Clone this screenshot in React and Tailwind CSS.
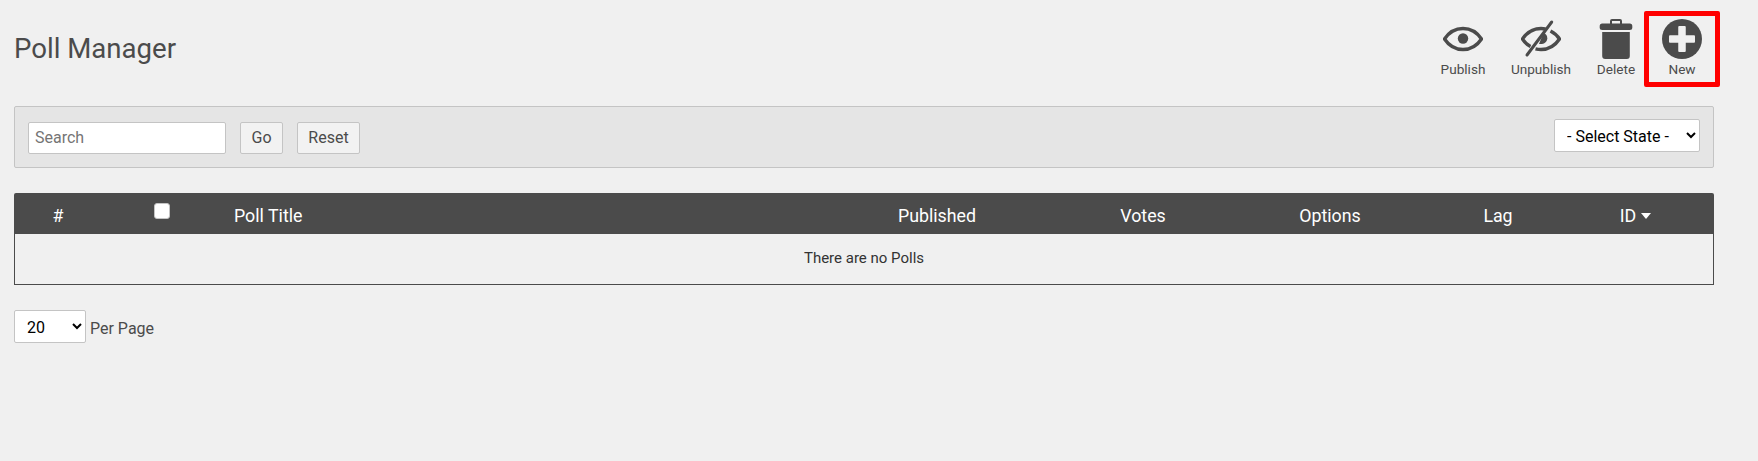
import React from 'react'

const EyeIcon = () => (
  <svg width="40" height="40" viewBox="0 0 40 40" fill="none">
    <path d="M1.500 20C6.500 12.500 13 9.500 20 9.500S33.500 12.500 38.500 20C33.500 27.500 27 30.500 20 30.500S6.500 27.500 1.500 20Z" stroke="#4b4b4b" strokeWidth="3.4" strokeLinejoin="round" />
    <circle cx="20" cy="19.500" r="5.2" fill="#4b4b4b" />
  </svg>
)

const EyeOffIcon = () => (
  <svg width="40" height="40" viewBox="0 0 40 40" fill="none">
    <path d="M9.500 27.500C6.500 26 3.800 23.500 1.500 20C6.500 12.500 13 9.500 20 9.500C21.500 9.500 23 9.700 24.500 10M29.500 12C33 13.800 36.300 16.500 38.500 20C33.500 27.500 27 30.500 20 30.500C18 30.500 16.500 30.300 14.500 29.800" stroke="#4b4b4b" strokeWidth="3.4" strokeLinejoin="round" />
    <path d="M22.500 13.800A6 6 0 0 1 26.300 19.500C26 23 23 25.500 18 25Z" fill="#4b4b4b" />
    <path d="M30.700 3L6 36" stroke="#4b4b4b" strokeWidth="3" strokeLinecap="round" />
  </svg>
)

const TrashIcon = () => (
  <svg width="34" height="40" viewBox="0 0 34 40">
    <path d="M12 5V2a1 1 0 0 1 1-1h8a1 1 0 0 1 1 1v3" fill="none" stroke="#4b4b4b" strokeWidth="2" />
    <rect x="0.700" y="4.500" width="32.600" height="6.500" rx="2.500" fill="#4b4b4b" />
    <path d="M3.200 13h27.600v24a3 3 0 0 1-3 3H6.200a3 3 0 0 1-3-3Z" fill="#4b4b4b" />
  </svg>
)

const PlusIcon = () => (
  <svg width="40" height="40" viewBox="0 0 40 40">
    <circle cx="20" cy="20" r="20" fill="#4b4b4b" />
    <rect x="16.250" y="7" width="7.500" height="26" rx="1" fill="#f0f0f0" />
    <rect x="7" y="16.250" width="26" height="7.500" rx="1" fill="#f0f0f0" />
  </svg>
)

const ToolbarButton = ({ icon, label, className }) => (
  <button className={`flex flex-col items-center text-[13.6px] leading-[16px] text-[#4b4b4b] ${className}`}>
    <span className="h-10 flex items-center justify-center">{icon}</span>
    <span className="mt-[2px] whitespace-nowrap">{label}</span>
  </button>
)

const App = () => {
  return (
    <div className="min-h-[461px] bg-[#f0f0f0] font-['Roboto',sans-serif] text-[#4b4b4b]">
      <div className="w-[1720px] pl-[14px] pt-[11px]">

        {/* TITLE + TOOLBAR */}
        <div className="flex items-start justify-between h-[76px]">
          <h1 className="text-[27.6px] leading-[32px] font-normal mt-[22px]">Poll Manager</h1>

          <div className="flex items-start">
            <ToolbarButton icon={<EyeIcon />} label="Publish" className="w-[60px] pt-[8px]" />
            <ToolbarButton icon={<EyeOffIcon />} label="Unpublish" className="w-[60px] ml-[18px] pt-[8px]" />
            <ToolbarButton icon={<TrashIcon />} label="Delete" className="w-[40px] ml-[25px] pt-[8px]" />
            <div className="ml-[8px] w-[76px] h-[76px] border-[5px] border-[#ff0000] rounded-[2px]">
              <ToolbarButton icon={<PlusIcon />} label="New" className="w-full pt-[3px]" />
            </div>
          </div>
        </div>

        {/* FILTER BAR */}
        <div className="w-[1700px] h-[62px] mt-[19px] flex items-start justify-between bg-[#e5e5e5] border border-[#c4c4c4] rounded-[2px] pl-[13px] pr-[13px]">
          <div className="flex items-center mt-[15px]">
            <input
              type="text"
              placeholder="Search"
              className="w-[198px] h-[32px] bg-white border border-[#c4c4c4] rounded-[2px] px-[6px] pb-[2px] text-[16px] placeholder:text-[#757575] outline-none"
            />
            <button className="ml-[14px] w-[43px] h-[32px] bg-[#f2f2f2] border border-[#c4c4c4] rounded-[2px] text-[16px]">Go</button>
            <button className="ml-[14px] w-[63px] h-[32px] bg-[#f2f2f2] border border-[#c4c4c4] rounded-[2px] text-[16px]">Reset</button>
          </div>
          <select className="w-[146px] h-[33px] mt-[12px] bg-white border border-[#c4c4c4] rounded-[2px] pl-[8px] pt-[2px] text-[16px] text-black outline-none">
            <option>- Select State -</option>
          </select>
        </div>

        {/* POLLS TABLE */}
        <table className="w-[1700px] mt-[25px] table-fixed border-separate border-spacing-0">
          <colgroup>
            <col className="w-[88px]" />
            <col className="w-[120px]" />
            <col className="w-[584px]" />
            <col className="w-[262px]" />
            <col className="w-[150px]" />
            <col className="w-[224px]" />
            <col className="w-[112px]" />
            <col className="w-[160px]" />
          </colgroup>
          <thead>
            <tr className="h-[41px] bg-[#4b4b4b] text-white text-[17.8px]">
              <th className="font-normal text-center pt-[5px] rounded-tl-[2px]">#</th>
              <th className="font-normal text-center align-top pt-[10px]">
                <input type="checkbox" className="appearance-none block mx-auto w-[16px] h-[16px] bg-white border border-[#c4c4c4] rounded-[3px]" />
              </th>
              <th className="font-normal text-left pt-[5px] pl-[12px]">Poll Title</th>
              <th className="font-normal text-center pt-[5px]">Published</th>
              <th className="font-normal text-center pt-[5px]">Votes</th>
              <th className="font-normal text-center pt-[5px]">Options</th>
              <th className="font-normal text-center pt-[5px]">Lag</th>
              <th className="font-normal text-center pt-[5px] pl-[3px] rounded-tr-[2px]">
                <span className="inline-flex items-center gap-[5px]">
                  ID
                  <svg width="10" height="6" viewBox="0 0 10 6">
                    <path d="M0 0h10L5 6Z" fill="#ffffff" />
                  </svg>
                </span>
              </th>
            </tr>
          </thead>
          <tbody>
            <tr>
              <td colSpan="8" className="h-[51px] pb-[1px] text-center text-[15px] text-[#333333] border border-t-0 border-[#4b4b4b]">
                There are no Polls
              </td>
            </tr>
          </tbody>
        </table>

        {/* PAGE SIZE */}
        <div className="flex items-center mt-[25px]">
          <select className="w-[72px] h-[33px] bg-white border border-[#c4c4c4] rounded-[2px] pl-[8px] pt-[2px] text-[16px] text-black outline-none">
            <option>20</option>
          </select>
          <span className="ml-[4px] mt-[5px] text-[16px]">Per Page</span>
        </div>
      </div>
    </div>
  )
}

export default App
